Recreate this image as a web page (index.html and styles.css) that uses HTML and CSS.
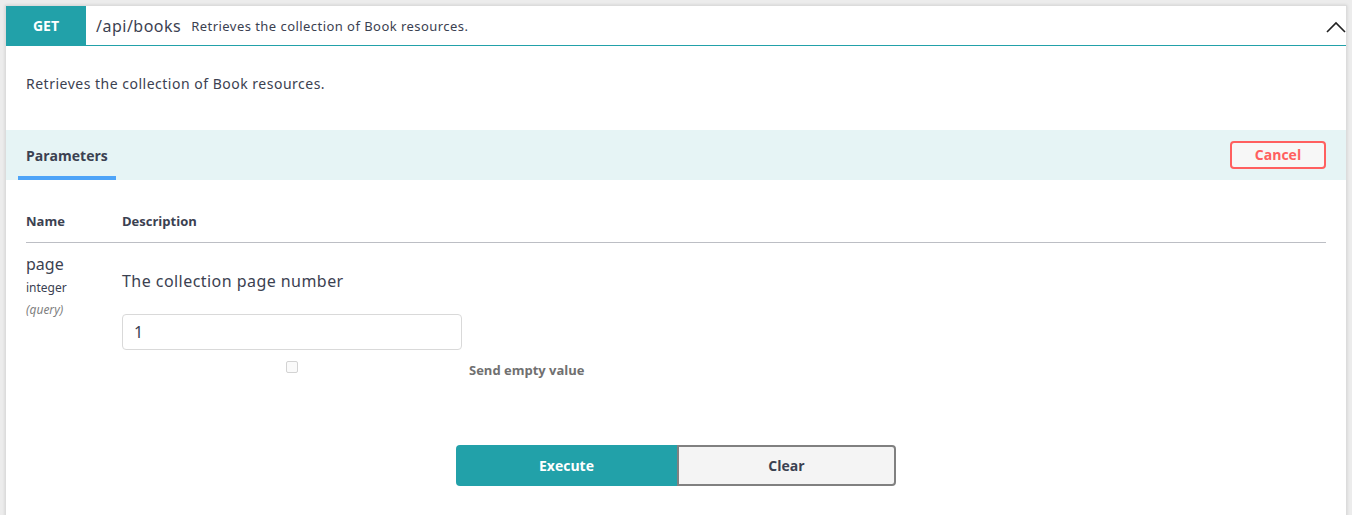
FILE: index.html
```html
<!DOCTYPE html>
<html lang="en">
<head>
<meta charset="utf-8">
<title>GET /api/books</title>
<link rel="stylesheet" href="styles.css">
</head>
<body>
<div class="opblock">
  <div class="summary">
    <span class="method">GET</span>
    <span class="path">/api/books</span>
    <span class="summary-desc">Retrieves the collection of Book resources.</span>
    <svg class="chevron" width="20" height="12" viewBox="0 0 20 12"><path d="M1 11 L10 2 L19 11" fill="none" stroke="#222" stroke-width="1.6"/></svg>
  </div>
  <div class="description">
    <p>Retrieves the collection of Book resources.</p>
  </div>
  <div class="section-header">
    <div class="tab"><span>Parameters</span></div>
    <button class="btn-cancel">Cancel</button>
  </div>
  <div class="params">
    <div class="param-head">
      <div class="col-name">Name</div>
      <div class="col-desc">Description</div>
    </div>
    <div class="param-row">
      <div class="col-name">
        <div class="pname">page</div>
        <div class="ptype">integer</div>
        <div class="pin">(query)</div>
      </div>
      <div class="col-desc">
        <div class="pdesc">The collection page number</div>
        <input class="pinput" type="text" value="1">
        <div class="empty-row">
          <span class="cb-wrap"><span class="cb"></span></span>
          <span class="empty-label">Send empty value</span>
        </div>
      </div>
    </div>
  </div>
  <div class="actions">
    <button class="btn-execute">Execute</button>
    <button class="btn-clear">Clear</button>
  </div>
</div>
</body>
</html>
```
FILE: styles.css
```css
* { box-sizing: border-box; }
html, body { margin: 0; height: 100%; }
body {
  background: #ececec;
  padding: 5px 5px 0 5px;
  font-family: "Noto Sans", "Liberation Sans", sans-serif;
  color: #3b4151;
  overflow: hidden;
}
.opblock {
  background: #fff;
  border: 1px solid #dcdcdc;
  border-bottom: none;
  box-shadow: 0 0 3px rgba(0,0,0,.12);
  height: 520px;
}
.summary {
  display: flex;
  align-items: center;
  height: 40px;
  border-bottom: 1px solid #22a1a9;
}
.method {
  width: 80px;
  height: 39px;
  background: #22a1a9;
  color: #fff;
  font-family: "Open Sans", sans-serif;
  font-weight: 700;
  font-size: 14px;
  display: flex;
  align-items: center;
  justify-content: center;
}
.path {
  margin-left: 10px;
  font-size: 16px;
  letter-spacing: 0.5px;
}
.summary-desc {
  margin-left: 10px;
  font-size: 13px;
  letter-spacing: 0.45px;
  flex: 1;
}
.chevron { margin-top: 2px; }
.description {
  padding: 28px 20px 0;
  height: 84px;
}
.description p {
  margin: 0;
  font-size: 14px;
  line-height: 20px;
  letter-spacing: 0.5px;
}
.section-header {
  background: #e6f4f5;
  height: 50px;
  display: flex;
  align-items: center;
  justify-content: space-between;
  padding: 0 20px 0 12px;
}
.tab {
  align-self: stretch;
  display: flex;
  align-items: flex-end;
}
.tab span {
  display: block;
  padding: 4px 8px 0;
  height: 50px;
  border-bottom: 4px solid #4ea4f8;
  font-family: "Open Sans", sans-serif;
  font-weight: 700;
  font-size: 14px;
  line-height: 44px;
}
.btn-cancel {
  width: 96px;
  height: 28px;
  background: #f7f7f7;
  border: 2px solid #ff5f5f;
  border-radius: 4px;
  color: #ff5f5f;
  font-family: "Open Sans", sans-serif;
  font-weight: 700;
  font-size: 14px;
  padding: 0;
  margin-top: -1px;
}
.params { padding: 0 20px; }
.param-head {
  display: flex;
  align-items: center;
  height: 63px;
  padding-top: 20px;
  border-bottom: 1px solid #bcbec4;
  font-family: "Open Sans", sans-serif;
  font-weight: 700;
  font-size: 13px;
}
.col-name { width: 96px; flex: none; }
.col-desc { flex: 1; }
.param-row {
  display: flex;
  padding-top: 12px;
}
.pname { font-size: 16px; line-height: 20px; margin-top: -1px; }
.ptype { font-size: 12px; line-height: 16px; margin-top: 6px; }
.pin { font-size: 12px; line-height: 16px; margin-top: 6px; font-style: italic; color: #808080; }
.pdesc { font-size: 16px; line-height: 20px; margin-top: 16px; letter-spacing: 0.45px; }
.pinput {
  display: block;
  margin-top: 23px;
  width: 340px;
  height: 36px;
  border: 1px solid #d9d9d9;
  border-radius: 4px;
  padding: 0 11px;
  font-family: "Noto Sans", "Liberation Sans", sans-serif;
  font-size: 16px;
  color: #3b4151;
  background: #fff;
}
.empty-row {
  display: flex;
  align-items: center;
  margin-top: 9px;
  height: 16px;
}
.cb-wrap { width: 340px; display: flex; justify-content: center; }
.cb {
  width: 12px; height: 12px;
  border: 1px solid #d3d3d3;
  border-radius: 2px;
  background: #fafafa;
}
.empty-label {
  margin-left: 7px;
  font-family: "Open Sans", sans-serif;
  font-weight: 700;
  font-size: 13px;
  color: #707070;
  margin-top: 5px;
}
.actions {
  display: flex;
  justify-content: center;
  margin-top: 70px;
}
.btn-execute, .btn-clear {
  height: 41px;
  font-family: "Open Sans", sans-serif;
  font-weight: 700;
  font-size: 14px;
  padding: 0;
}
.btn-execute {
  width: 221px;
  background: #22a1a9;
  color: #fff;
  border: none;
  border-radius: 4px 0 0 4px;
}
.btn-clear {
  width: 219px;
  background: #f4f4f4;
  color: #3b4151;
  border: 2px solid #808080;
  border-radius: 0 4px 4px 0;
}
```
